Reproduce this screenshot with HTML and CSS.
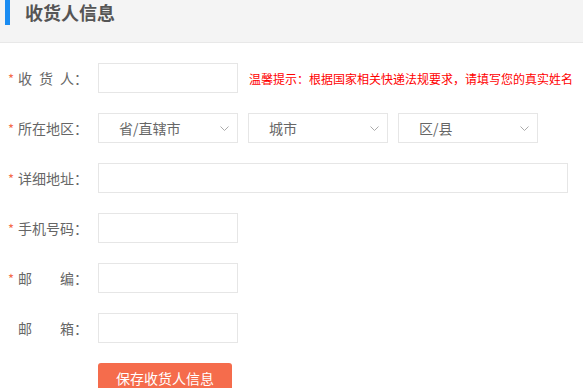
FILE: index.html
```html
<!DOCTYPE html>
<html lang="zh-CN">
<head>
  <meta charset="UTF-8">
  <title>收货人信息</title>
  <link rel="stylesheet" href="styles.css">
</head>
<body>
  <div class="header">
    <h2>收货人信息</h2>
  </div>

  <form class="form">
    <div class="row">
      <label class="label"><span class="star">*</span><span class="name"><i>收</i><i>货</i><i>人</i></span>：</label>
      <input type="text" class="input">
      <span class="hint">温馨提示：根据国家相关快递法规要求，请填写您的真实姓名</span>
    </div>
    <div class="row">
      <label class="label"><span class="star">*</span><span class="name"><i>所</i><i>在</i><i>地</i><i>区</i></span>：</label>
      <div class="select"><span>省/直辖市</span><svg width="9" height="5" viewBox="0 0 9 5"><path d="M0.5 0.5 L4.5 4.5 L8.5 0.5" fill="none" stroke="#aaa" stroke-width="1"/></svg></div>
      <div class="select"><span>城市</span><svg width="9" height="5" viewBox="0 0 9 5"><path d="M0.5 0.5 L4.5 4.5 L8.5 0.5" fill="none" stroke="#aaa" stroke-width="1"/></svg></div>
      <div class="select"><span>区/县</span><svg width="9" height="5" viewBox="0 0 9 5"><path d="M0.5 0.5 L4.5 4.5 L8.5 0.5" fill="none" stroke="#aaa" stroke-width="1"/></svg></div>
    </div>
    <div class="row">
      <label class="label"><span class="star">*</span><span class="name"><i>详</i><i>细</i><i>地</i><i>址</i></span>：</label>
      <input type="text" class="input wide">
    </div>
    <div class="row">
      <label class="label"><span class="star">*</span><span class="name"><i>手</i><i>机</i><i>号</i><i>码</i></span>：</label>
      <input type="text" class="input">
    </div>
    <div class="row">
      <label class="label"><span class="star">*</span><span class="name"><i>邮</i><i>编</i></span>：</label>
      <input type="text" class="input">
    </div>
    <div class="row">
      <label class="label"><span class="star"></span><span class="name"><i>邮</i><i>箱</i></span>：</label>
      <input type="text" class="input">
    </div>
    <div class="row">
      <span class="label"></span>
      <button type="button" class="btn">保存收货人信息</button>
    </div>
  </form>
</body>
</html>
```

FILE: styles.css
```css
body {
  margin: 0;
  background-color: white;
  font-family: "Noto Sans CJK SC", "Noto Sans", sans-serif;
  color: #666;
}

.header {
  height: 42px;
  background-color: #f4f4f4;
  border-bottom: 1px solid #e8e8e8;
}

.header h2 {
  margin: 0 0 0 5px;
  padding-left: 15px;
  border-left: 5px solid #1a8cf2;
  height: 25px;
  line-height: 25px;
  font-size: 18px;
  font-weight: bold;
  color: #555;
}

.form {
  padding-top: 20px;
}

.row {
  display: flex;
  align-items: center;
  height: 30px;
  margin-bottom: 20px;
}

.label {
  display: flex;
  align-items: center;
  width: 98px;
  padding-left: 8px;
  box-sizing: border-box;
  font-size: 14px;
  color: #666;
}

.star {
  width: 10px;
  color: #f56c4c;
  font-size: 13px;
  line-height: 14px;
  position: relative;
  top: 1px;
}

.name {
  display: flex;
  justify-content: space-between;
  width: 56px;
}

.name i {
  font-style: normal;
}

.input {
  width: 140px;
  height: 30px;
  box-sizing: border-box;
  border: 1px solid #e6e6e6;
  padding: 0 8px;
  margin: 0;
  outline: none;
}

.input.wide {
  width: 470px;
}

.hint {
  margin-left: 11px;
  font-size: 12px;
  color: #f00;
}

.select {
  display: flex;
  align-items: center;
  justify-content: space-between;
  width: 140px;
  height: 30px;
  box-sizing: border-box;
  border: 1px solid #e6e6e6;
  padding: 0 8px 0 20px;
  margin-right: 10px;
  font-size: 14px;
  color: #666;
}

.btn {
  width: 134px;
  height: 30px;
  border: none;
  border-radius: 3px;
  background-color: #f56c4c;
  color: white;
  font-family: inherit;
  font-size: 14px;
  padding: 0;
}
```
